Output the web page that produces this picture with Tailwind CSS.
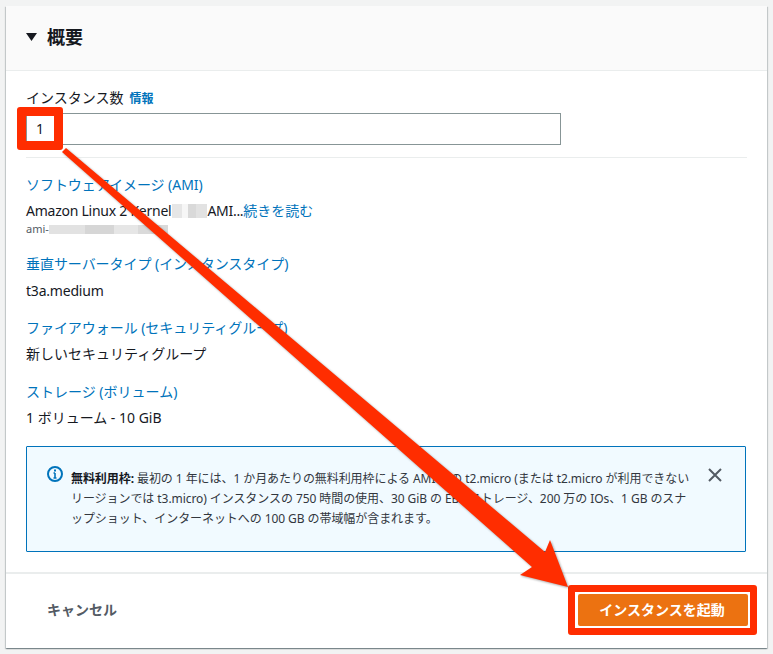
<!DOCTYPE html>
<html lang="ja">
<head>
<meta charset="utf-8">
<script src="https://cdn.jsdelivr.net/npm/@tailwindcss/browser@4"></script>
</head>
<body class="relative w-[773px] h-[654px] overflow-hidden bg-[#f2f3f3] font-['Noto_Sans','Noto_Sans_CJK_JP',sans-serif] text-sm text-[#16191f]">
  <div class="absolute inset-x-[6px] top-[6px] h-[642px] flex flex-col bg-white shadow-[0_1px_1px_0_rgba(0,28,36,0.3),1px_1px_1px_0_rgba(0,28,36,0.15),-1px_1px_1px_0_rgba(0,28,36,0.15)]">
    <!-- header -->
    <div class="h-[65px] flex items-center gap-[10px] pl-5 pb-[2px] bg-[#fafafa] border-b border-[#eaeded]">
      <svg width="11" height="8" viewBox="0 0 11 8"><path d="M0 0h11L5.500 8z" fill="#16191f"/></svg>
      <h2 class="text-lg font-bold leading-none">概要</h2>
    </div>

    <!-- body -->
    <div class="flex-1 px-5 pt-[17px]">
      <div class="flex items-center gap-[6px] h-[20px] leading-5">
        <span>インスタンス数</span>
        <span class="text-xs font-bold text-[#0073bb] mt-px">情報</span>
      </div>
      <div class="mt-[5px] w-[535px] h-[32px] flex items-center pl-[9px] border border-[#879596] bg-white">1</div>
      <div class="mt-3 border-t border-[#eaeded]"></div>

      <div class="mt-[17px] leading-5 text-[#0073bb] tracking-[-0.05px]">ソフトウェアイメージ (AMI)</div>
      <div class="mt-[6px] leading-5 flex items-center">
        <span class="tracking-[-0.25px]">Amazon Linux 2 Kernel</span>
        <span class="ml-px w-[35px] h-[14px] bg-[linear-gradient(90deg,#e6e6e6_0_28%,#f6f6f6_28%_45%,#d9d9d9_45%_70%,#e2e2e2_70%_100%)]"></span>
        <span class="tracking-[-0.3px]">AMI...</span><span class="text-[#0073bb]">続きを読む</span>
      </div>
      <div class="h-[16px] flex items-center text-[11px] text-[#545b64]">
        <span>ami-</span><span class="w-[119px] h-[9px] bg-[linear-gradient(90deg,#e2e2e2_0_30%,#d6d6d6_30%_55%,#e6e6e6_55%_75%,#dadada_75%_100%)]"></span>
      </div>

      <div class="mt-[17px] leading-5 text-[#0073bb] tracking-[-0.05px]">垂直サーバータイプ (インスタンスタイプ)</div>
      <div class="mt-[7px] leading-5 tracking-[-0.2px]">t3a.medium</div>

      <div class="mt-[17px] leading-5 text-[#0073bb] tracking-[-0.05px]">ファイアウォール (セキュリティグループ)</div>
      <div class="mt-[6px] leading-5">新しいセキュリティグループ</div>

      <div class="mt-[18px] leading-5 text-[#0073bb]">ストレージ (ボリューム)</div>
      <div class="mt-[6px] leading-5">1 ボリューム - 10 GiB</div>

      <!-- free tier notice -->
      <div class="mt-[18px] mr-px h-[106px] flex border border-[#0073bb] rounded-[1px] bg-[#f1faff] pl-5 pr-5 pt-[18px] text-xs">
        <svg class="shrink-0 mt-[1px]" width="16" height="16" viewBox="0 0 16 16" fill="none" stroke="#0073bb" stroke-width="2">
          <circle cx="8" cy="8" r="7"/>
          <path d="M8 7v5M6.500 12h3M6.500 7H8" stroke-width="1.600"/>
          <path d="M8 3.500v2" stroke-width="2"/>
        </svg>
        <p class="ml-[8px] mt-[4px] w-[622px] shrink-0 whitespace-nowrap leading-5 text-[#32373e] tracking-[-0.07px]"><b class="font-bold text-[#16191f]">無料利用枠:</b> 最初の 1 年には、1 か月あたりの無料利用枠による AMI での t2.micro (または t2.micro が利用できない<br>リージョンでは t3.micro) インスタンスの 750 時間の使用、30 GiB の EBS ストレージ、200 万の IOs、1 GB のスナ<br>ップショット、インターネットへの 100 GB の帯域幅が含まれます。</p>
        <svg class="shrink-0 ml-[15px] mt-[3px]" width="14" height="14" viewBox="0 0 14 14" fill="none" stroke="#545b64" stroke-width="2"><path d="M1 1l12 12M13 1L1 13"/></svg>
      </div>
    </div>

    <!-- footer -->
    <div class="h-[76px] flex items-center justify-between pl-[41px] pr-[19px] pb-[2px] border-t-2 border-[#eaeded]">
      <span class="font-bold text-[#545b64]">キャンセル</span>
      <button class="w-[170px] h-[32px] pr-[2px] bg-[#ec7211] rounded-[2px] text-white font-bold text-sm">インスタンスを起動</button>
    </div>
  </div>

  <!-- annotations -->
  <div class="absolute left-[17px] top-[107px] w-[46px] h-[43px] border-[9px] border-[#ff2d00] rounded-[3px]"></div>
  <div class="absolute left-[568px] top-[585px] w-[189px] h-[50px] border-[7px] border-[#ff2d00] rounded-[3px]"></div>
  <div class="absolute left-[575px] top-[592px] w-[175px] h-[36px] border-2 border-white"></div>
  <svg class="absolute inset-0 drop-shadow-[1px_1px_1px_rgba(0,0,0,0.35)]" width="773" height="654" viewBox="0 0 773 654">
    <path d="M66 148L545 552L550 540L568 587L520 575L532 567L62 152z" fill="#ff2d00"/>
  </svg>
</body>
</html>
